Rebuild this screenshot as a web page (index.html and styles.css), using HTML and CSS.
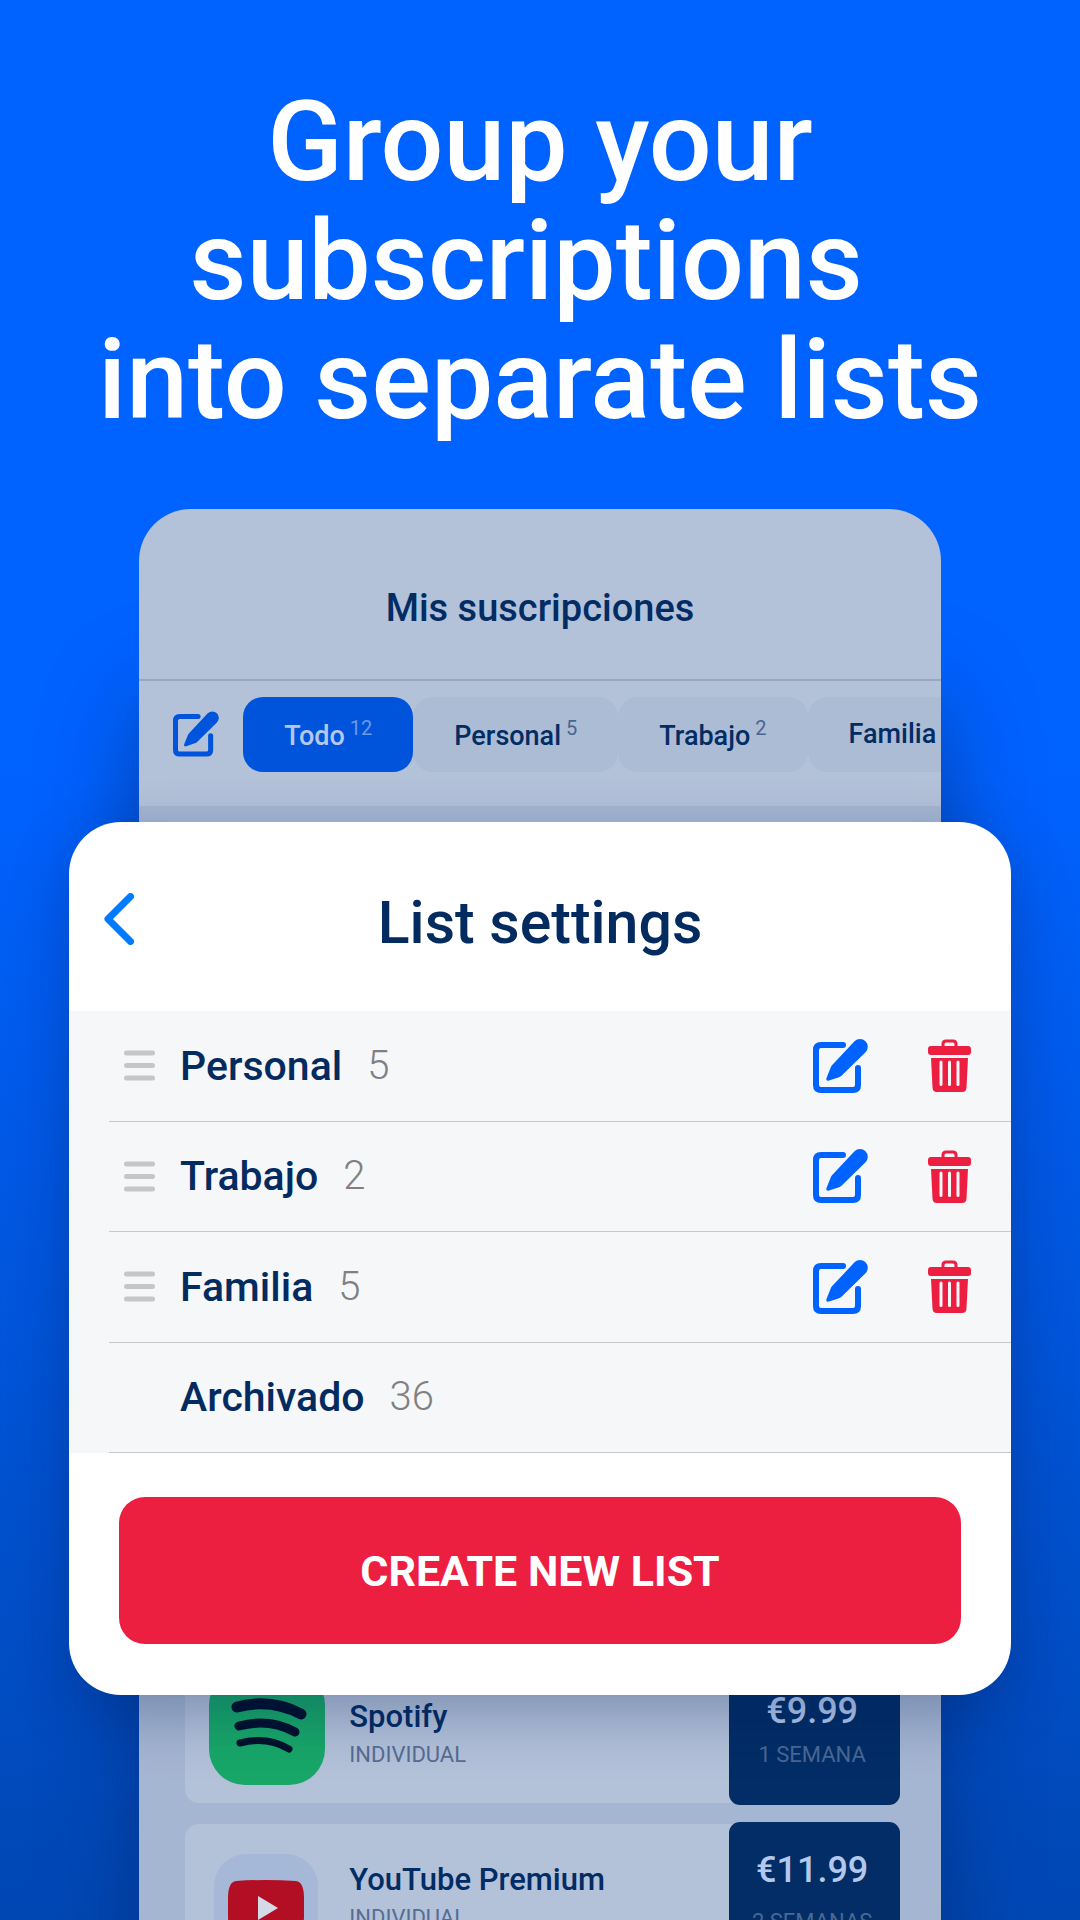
FILE: index.html
```html
<!DOCTYPE html>
<html lang="en">
<head>
<meta charset="utf-8">
<meta name="viewport" content="width=device-width, initial-scale=1">
<title>List settings</title>
<link rel="stylesheet" href="styles.css">
</head>
<body>
<svg class="sprite" aria-hidden="true">
  <symbol id="edit" viewBox="0 0 55 54">
    <path d="M30 6H8Q3 6 3 11V46Q3 51 8 51H40Q45 51 45 46V29" fill="none" stroke="currentColor" stroke-width="6" stroke-linecap="round"/>
    <path d="M41.500 2.300A7.700 7.700 0 0 1 52.500 13.300L28.500 36.800Q27.500 37.800 26 38.200L16 41.600Q12.500 42.500 13.500 39L17.500 29Q18 27.500 19 26.300Z" fill="currentColor"/>
  </symbol>
  <symbol id="trash" viewBox="0 0 43 53">
    <path d="M15 8V5Q15 2 18 2H25Q28 2 28 5V8" fill="none" stroke="currentColor" stroke-width="3"/>
    <rect x="0" y="7" width="43" height="9" rx="3" fill="currentColor"/>
    <path fill-rule="evenodd" fill="currentColor" d="M3 19H40L38.500 48.500Q38.300 53 34 53H9Q4.700 53 4.500 48.500ZM13 21.500Q11.500 21.500 11.500 23V45.500Q11.500 47 13 47T14.500 45.500V23Q14.500 21.500 13 21.500ZM21.500 21.500Q20 21.500 20 23V45.500Q20 47 21.500 47T23 45.500V23Q23 21.500 21.500 21.500ZM30 21.500Q28.500 21.500 28.500 23V45.500Q28.500 47 30 47T31.500 45.500V23Q31.500 21.500 30 21.500Z"/>
  </symbol>
  <symbol id="grip" viewBox="0 0 31 31">
    <path d="M2.500 3H28.500M2.500 15.500H28.500M2.500 28H28.500" stroke="currentColor" stroke-width="5" stroke-linecap="round"/>
  </symbol>
</svg>

<main class="stage">
  <h1 class="headline">Group your<br>subscriptions&nbsp;<br>into separate lists</h1>

  <section class="phone">
    <h2 class="phone-title">Mis suscripciones</h2>
    <nav class="tabs">
      <button class="icon-button tabs-edit" aria-label="Editar listas"><svg class="icon-small"><use href="#edit"/></svg></button>
      <button class="tab tab-active">Todo<span class="tab-count">12</span></button>
      <button class="tab">Personal<span class="tab-count">5</span></button>
      <button class="tab">Trabajo<span class="tab-count">2</span></button>
      <button class="tab">Familia</button>
    </nav>
    <div class="feed">
      <article class="card">
        <svg class="logo" viewBox="0 0 116 116" aria-hidden="true">
          <rect width="116" height="116" rx="36" fill="#18a768"/>
          <g fill="none" stroke="#00102c" stroke-linecap="round">
            <path d="M28 38Q62 29 92 45" stroke-width="11"/>
            <path d="M30 57Q60 49 86 63" stroke-width="9"/>
            <path d="M31 74Q58 67 80 80" stroke-width="7"/>
          </g>
        </svg>
        <div class="card-text">
          <h3 class="card-name">Spotify</h3>
          <p class="card-plan">INDIVIDUAL</p>
        </div>
        <div class="price price-short">
          <span class="amount">€9.99</span>
          <span class="period">1 SEMANA</span>
        </div>
      </article>
      <article class="card">
        <svg class="logo logo-low" viewBox="0 0 116 116" aria-hidden="true">
          <rect x="5" y="6" width="104" height="104" rx="32" fill="#a6b8d8"/>
          <path d="M19 50Q19 34 27 33Q57 31 87 33Q95 34 95 50V68Q95 84 87 85Q57 87 27 85Q19 84 19 68Z" fill="#b30f24"/>
          <path d="M49 48L69 60L49 72Z" fill="#d5dae8"/>
        </svg>
        <div class="card-text">
          <h3 class="card-name">YouTube Premium</h3>
          <p class="card-plan">INDIVIDUAL</p>
        </div>
        <div class="price">
          <span class="amount">€11.99</span>
          <span class="period">2 SEMANAS</span>
        </div>
      </article>
    </div>
  </section>

  <section class="sheet">
    <header class="sheet-header">
      <button class="icon-button" aria-label="Back"><svg class="chevron" viewBox="0 0 30 52"><path d="M26.500 3.500L4 26L26.500 48.500" fill="none" stroke="#007aff" stroke-width="7" stroke-linecap="round" stroke-linejoin="round"/></svg></button>
      <h2 class="sheet-title">List settings</h2>
    </header>
    <ul class="lists">
      <li class="row">
        <svg class="grip"><use href="#grip"/></svg>
        <span class="name">Personal</span><span class="count">5</span>
        <button class="icon-button edit" aria-label="Edit Personal"><svg class="icon-edit"><use href="#edit"/></svg></button>
        <button class="icon-button trash" aria-label="Delete Personal"><svg class="icon-trash"><use href="#trash"/></svg></button>
      </li>
      <li class="row">
        <svg class="grip"><use href="#grip"/></svg>
        <span class="name">Trabajo</span><span class="count">2</span>
        <button class="icon-button edit" aria-label="Edit Trabajo"><svg class="icon-edit"><use href="#edit"/></svg></button>
        <button class="icon-button trash" aria-label="Delete Trabajo"><svg class="icon-trash"><use href="#trash"/></svg></button>
      </li>
      <li class="row">
        <svg class="grip"><use href="#grip"/></svg>
        <span class="name">Familia</span><span class="count">5</span>
        <button class="icon-button edit" aria-label="Edit Familia"><svg class="icon-edit"><use href="#edit"/></svg></button>
        <button class="icon-button trash" aria-label="Delete Familia"><svg class="icon-trash"><use href="#trash"/></svg></button>
      </li>
      <li class="row">
        <span class="grip"></span>
        <span class="name">Archivado</span><span class="count">36</span>
      </li>
    </ul>
    <button class="create">CREATE NEW LIST</button>
  </section>
</main>
</body>
</html>
```
FILE: styles.css
```css
* { box-sizing: border-box; }

body {
  margin: 0;
  background: #0062ff;
  color: #042b60;
  font-family: Roboto, "Noto Sans", sans-serif;
}

h1, h2, h3, p, ul { margin: 0; padding: 0; font-weight: 500; }

button {
  border: 0;
  padding: 0;
  font-family: inherit;
  cursor: pointer;
}

svg { display: block; }

.sprite { position: absolute; width: 0; height: 0; }

.icon-button {
  flex: none;
  background: none;
  color: #0062ff;
}

.stage {
  position: relative;
  height: 100vh;
  min-height: 1800px;
  padding-top: 83px;
  overflow: hidden;
  background: linear-gradient(#0062ff 40%, #0047b3);
}

.headline {
  color: #fff;
  font-size: 111px;
  line-height: 119px;
  text-align: center;
}

.phone {
  width: 74.2%;
  margin: 69px auto 0;
  overflow: hidden;
  border-radius: 52px 52px 0 0;
  background: #b3c1d9;
  box-shadow: 0 190px 90px rgba(0, 40, 110, 0.6);
}

.phone-title {
  padding: 73px 0 45px;
  border-bottom: 2px solid #98a8c4;
  color: #022c64;
  font-size: 38px;
  line-height: 52px;
  text-align: center;
}

.tabs {
  display: flex;
  align-items: center;
  height: 125px;
  padding: 0 0 19px 34px;
}

.tabs-edit { margin-right: 24px; color: #0054dc; }

.icon-small { width: 46px; height: 46px; }

.tab {
  flex: none;
  height: 75px;
  padding: 0 41px;
  border-radius: 20px;
  background: #acbcd5;
  color: #022c64;
  font-size: 27px;
  font-weight: 500;
}

.tab-active {
  min-width: 170px;
  background: #0054dc;
  color: #b3c8ea;
}

.tab-count {
  margin-left: 5px;
  font-size: 20px;
  font-weight: 400;
  vertical-align: 10px;
  opacity: 0.6;
}

.feed {
  display: grid;
  gap: 21px;
  padding: 855px 41px 40px 46px;
  background: #a5b6d2;
}

.card {
  display: flex;
  height: 142px;
  border-radius: 14px;
  background: #b3c1d9;
}

.logo {
  flex: none;
  width: 116px;
  height: 116px;
  margin: 8px 24px 0;
}

.logo-low { margin-top: 24px; }

.card-text { flex: 1; padding-top: 36px; }

.card-name {
  color: #022c64;
  font-size: 31px;
  line-height: 40px;
}

.card-plan {
  color: #566d94;
  font-size: 22px;
  font-weight: 400;
  line-height: 36px;
}

.price {
  display: flex;
  flex-direction: column;
  gap: 16px;
  width: 171px;
  margin: -2px 0;
  padding: 28px 4px 0 0;
  border-radius: 11px;
  background: #022d66;
  text-align: center;
}

.price-short { gap: 8px; padding-top: 32px; }

.amount {
  color: #b3c8ea;
  font-size: 36px;
  font-weight: 500;
  line-height: 40px;
}

.period {
  color: #4a6892;
  font-size: 22px;
  line-height: 32px;
}

.sheet {
  position: absolute;
  top: 822px;
  right: 6.4%;
  left: 6.4%;
  overflow: hidden;
  border-radius: 52px;
  background: #fff;
  box-shadow: 0 20px 60px rgba(0, 30, 90, 0.3);
}

.sheet-header {
  display: grid;
  grid-template-columns: 30px 1fr 30px;
  align-items: center;
  height: 189px;
  padding: 4px 35px 0;
}

.chevron { width: 30px; height: 52px; }

.sheet-title {
  padding-top: 8px;
  font-size: 59px;
  line-height: 72px;
  text-align: center;
}

.lists {
  display: grid;
  grid-template-rows: repeat(4, 1fr);
  min-height: 442px;
  padding-left: 40px;
  background: #f5f7f9;
  list-style: none;
}

.row {
  display: flex;
  align-items: center;
  padding: 0 40px 0 15px;
  border-bottom: 1px solid #c6c9cc;
}

.grip {
  flex: none;
  width: 31px;
  height: 31px;
  margin-right: 25px;
  color: #c6c6c8;
}

.name { font-size: 41px; font-weight: 500; line-height: 52px; }

.count {
  margin-left: 25px;
  color: #808083;
  font-size: 40px;
  font-weight: 300;
  line-height: 52px;
}

.edit { margin-left: auto; }
.trash { margin-left: 60px; color: #ed1f41; }
.icon-edit { width: 55px; height: 54px; }
.icon-trash { width: 43px; height: 53px; }

.create {
  display: block;
  width: calc(100% - 100px);
  height: 147px;
  margin: 44px 50px 51px;
  border-radius: 26px;
  background: #ed1f41;
  color: #fff;
  font-size: 43px;
  font-weight: 700;
}
```
